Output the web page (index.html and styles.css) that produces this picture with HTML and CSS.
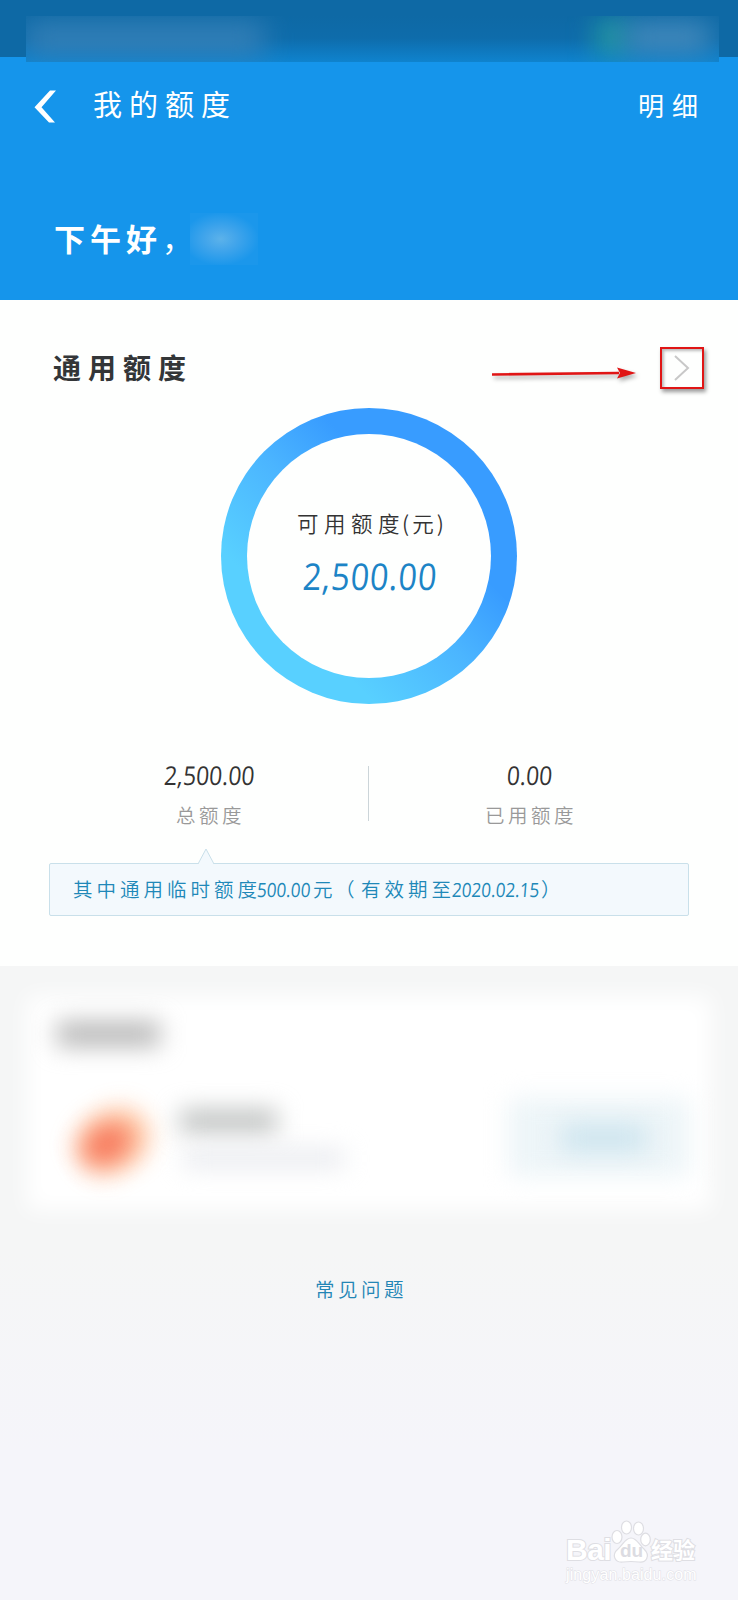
FILE: index.html
```html
<!DOCTYPE html>
<html lang="zh-CN">
<head>
<meta charset="utf-8">
<title>我的额度</title>
<link rel="stylesheet" href="styles.css">
</head>
<body>
<div class="page">
  <header class="hero">
    <div class="status">
      <div class="status-blur"><i class="smudge smudge-left"></i><i class="smudge smudge-green"></i><i class="smudge smudge-right"></i></div>
    </div>
    <nav class="nav">
      <svg class="back" width="24" height="34" viewBox="0 0 24 34"><path d="M16 0.500H22L7.500 17.300 21 32.500H15L0.500 17.300Z" fill="#fff"/></svg>
      <h1 class="title">我的额度</h1>
      <a class="detail">明细</a>
    </nav>
    <div class="greeting"><span class="hello">下午好<span class="comma">，</span></span><i class="name-blur"></i></div>
  </header>
  <main class="quota">
    <div class="quota-head">
      <h2 class="quota-title">通用额度</h2>
      <svg class="arrow" width="148" height="20" viewBox="0 0 148 20"><path d="M1 12.500 128 11" stroke="#e01515" stroke-width="2.600"/><path d="M126 5.500 145 11 126 16.500 129 11Z" fill="#e01515"/></svg>
      <div class="marker"><svg width="16" height="28" viewBox="0 0 16 28"><path d="M1 2 14 14 1 26" fill="none" stroke="#c8c8c8" stroke-width="2"/></svg></div>
    </div>
    <div class="ring">
      <div class="ring-inner">
        <div class="ring-label">可用额度<span class="unit">(元)</span></div>
        <div class="ring-value"><span class="num">2,500.00</span></div>
      </div>
    </div>
    <div class="stats">
      <div class="stat stat-total"><div class="stat-value num">2,500.00</div><div class="stat-label">总额度</div></div>
      <div class="divider"></div>
      <div class="stat stat-used"><div class="stat-value num">0.00</div><div class="stat-label">已用额度</div></div>
    </div>
    <div class="notice">
      <svg class="notch" width="18" height="17" viewBox="0 0 18 17"><path d="M1 16 9 1 17 16V17H1Z" fill="#f3f9fd"/><path d="M1 16 9 1 17 16" fill="none" stroke="#c9e0ea"/></svg>
      <span class="n-a">其中通用临时额度</span><span class="n-b"><span class="num">500.00</span></span><span class="n-c">元</span><span class="n-d">（</span><span class="n-e">有效期至</span><span class="n-f"><span class="num">2020.02.15</span></span><span class="n-g">）</span>
    </div>
  </main>
  <section class="promo">
    <div class="promo-card"></div>
    <i class="blob blob-heading"></i>
    <i class="blob blob-glow"></i><i class="blob blob-logo"></i>
    <i class="blob blob-name"></i>
    <i class="blob blob-desc"></i>
    <i class="blob blob-button"></i><i class="blob blob-action"></i>
  </section>
  <footer class="footer"><a class="faq">常见问题</a></footer>
  <div class="watermark">
    <div class="brand">
      <span class="bai">Bai</span>
      <span class="paw"><svg width="40" height="44" viewBox="0 0 40 44"><g fill="#fff" stroke="#dedee3" stroke-width="1.200"><ellipse cx="6" cy="17" rx="5" ry="6.500"/><ellipse cx="15.500" cy="7.500" rx="5" ry="6.500"/><ellipse cx="27.500" cy="8.500" rx="5" ry="6.500"/><ellipse cx="34.500" cy="19.500" rx="4.800" ry="6.300"/><path d="M20 18C26 18 28 25 33 29C40 36 35 43 28 42Q20 41 12 42C4 43 0 35 7 29C12 25 14 18 20 18Z"/></g></svg><b class="du">du</b></span>
      <span class="jy">经验</span>
    </div>
    <div class="url">jingyan.baidu.com</div>
  </div>
</div>
</body>
</html>
```
FILE: styles.css
```css
* { box-sizing: border-box; }
body { margin: 0; font-family: "Noto Sans CJK SC", sans-serif; background: #f5f5fa; }
h1, h2 { margin: 0; }
i { display: block; }
.page { position: relative; width: 738px; height: 1600px; overflow: hidden; background: linear-gradient(#f5f6f6 1250px, #f5f5fa 1450px); }
.num { display: inline-block; font-family: "Open Sans", sans-serif; font-weight: 400; transform-origin: left center; transform: scaleX(.88) skewX(-5deg); }

.hero { height: 300px; background: #1595eb; }
.status { height: 57px; padding: 16px 19px 0 26px; background: #0e69a5; }
.status-blur { position: relative; height: 46px; overflow: hidden; background: linear-gradient(#0e69a5 0, #0e6cab 22px, #0f83ce 46px); }
.smudge { position: absolute; filter: blur(14px); }
.smudge-left { left: 0; top: 6px; width: 238px; height: 34px; background: #3b83b9; opacity: .85; }
.smudge-green { left: 572px; top: 6px; width: 28px; height: 30px; background: #2ba69e; }
.smudge-right { left: 600px; top: 7px; width: 84px; height: 29px; background: #488cbd; }

.nav { display: flex; align-items: center; height: 98px; padding: 0 34px; color: #fff; }
.back { margin-top: 2px; }
.title { margin: -6px 0 0 35px; font-size: 29px; font-weight: 400; line-height: 40px; letter-spacing: 7px; }
.detail { margin: -2px -2px 0 auto; font-size: 26px; font-weight: 400; line-height: 40px; letter-spacing: 8px; }
.greeting { display: flex; align-items: center; height: 52px; margin-top: 58px; padding-left: 54px; color: #fff; }
.hello { width: 136px; white-space: nowrap; font-size: 31px; font-weight: 700; letter-spacing: 5px; line-height: 44px; margin-top: -2px; }
.comma { font-weight: 400; }
.name-blur { width: 68px; height: 52px; background: radial-gradient(ellipse at 45% 50%, #5cb2ea 0, #42a5eb 30%, #1b97eb 72%); }

.quota { height: 666px; background: #fefffe; }
.quota-head { display: flex; align-items: center; height: 108px; padding: 27px 34px 0 53px; }
.quota-title { font-size: 28px; font-weight: 700; letter-spacing: 7px; line-height: 44px; margin-top: -1px; color: #333638; }
.arrow { margin: 9px 21px 0 auto; filter: drop-shadow(2px 3px 2px #aaa); }
.marker { display: flex; align-items: center; justify-content: center; width: 44px; height: 42px; border: 2px solid #e01515; box-shadow: 2px 3px 4px #999, inset 2px 2px 3px #bbb; }
.ring { width: 296px; height: 296px; margin-left: 221px; padding: 26px; border-radius: 50%; background: linear-gradient(45deg, #58d0ff 26%, #4bb5ff 49%, #389cff 66%); }
.ring-inner { height: 244px; padding-top: 71px; border-radius: 50%; background: #fefffe; }
.ring-label { padding-left: 50px; font-size: 21.500px; font-weight: 350; line-height: 36px; letter-spacing: 5.500px; color: #333; white-space: nowrap; }
.unit { margin-left: -3px; letter-spacing: 3px; }
.ring-value { padding-left: 56px; font-size: 37px; line-height: 50px; letter-spacing: .800px; color: #1c84c6; margin-top: 8px; }

.stats { display: flex; height: 68px; margin-top: 53px; }
.stat { display: flex; flex-direction: column; align-items: center; }
.stat-total { width: 368px; padding-left: 50px; }
.stat-used { width: 369px; padding-right: 48px; }
.stat-value { font-size: 26px; line-height: 36px; letter-spacing: 0; color: #333; transform-origin: center; }
.stat-label { margin-top: 8px; font-size: 19.500px; font-weight: 350; line-height: 28px; letter-spacing: 3.500px; color: #999; margin-right: -3px; }
.divider { width: 1px; height: 55px; margin-top: 9px; background: #ccd5d9; }
.notice { position: relative; display: flex; align-items: center; width: 640px; height: 53px; margin: 38px 0 0 49px; padding: 0 0 2px 23px; background: #f3f9fd; border: 1px solid #c9e0ea; border-radius: 2px; font-size: 19.500px; font-weight: 350; color: #2088b8; white-space: nowrap; }
.notch { position: absolute; left: 147px; top: -16px; }
.n-a { width: 184px; letter-spacing: 4px; }
.n-b { width: 56px; letter-spacing: 0; }
.n-c { width: 22px; }
.n-d { width: 26px; }
.n-e { width: 91px; letter-spacing: 4px; }
.n-f { width: 89px; letter-spacing: 0; }

.promo { position: relative; height: 264px; overflow: hidden; }
.promo-card { position: absolute; left: 27px; top: 30px; width: 684px; height: 214px; background: #fff; filter: blur(11px); }
.blob { position: absolute; filter: blur(12px); }
.blob-heading { left: 57px; top: 56px; width: 103px; height: 24px; background: #b4b4b4; }
.blob-logo { left: 80px; top: 159px; width: 54px; height: 38px; border-radius: 50%; background: #f4583f; opacity: .75; transform: rotate(-30deg); filter: blur(13px); }
.blob-glow { left: 74px; top: 144px; width: 78px; height: 62px; border-radius: 50%; background: #ffb780; opacity: .65; transform: rotate(-30deg); }
.blob-name { left: 180px; top: 144px; width: 97px; height: 22px; background: #bbbebd; }
.blob-desc { left: 184px; top: 184px; width: 160px; height: 17px; background: #e6e8ed; }
.blob-button { left: 509px; top: 132px; width: 180px; height: 78px; background: #edf5f8; }
.blob-action { left: 562px; top: 159px; width: 84px; height: 26px; background: #cce4ee; }

.footer { display: flex; padding: 45px 0 0 315px; }
.faq { font-size: 19.500px; font-weight: 350; line-height: 28px; letter-spacing: 3.500px; color: #2385b5; }

.watermark { position: absolute; left: 566px; top: 1520px; width: 140px; color: #fff; }
.brand { display: flex; align-items: flex-end; height: 44px; }
.bai { width: 45px; font: 700 30px/28px "Liberation Sans", sans-serif; letter-spacing: -.500px; -webkit-text-stroke: 2px #dedee3; paint-order: stroke fill; }
.paw { position: relative; width: 40px; height: 44px; }
.du { position: absolute; left: 9px; top: 20px; font: 700 19px/21px "Liberation Sans", sans-serif; color: #dcdce2; }
.jy { font-size: 22px; font-weight: 700; line-height: 32px; -webkit-text-stroke: 2px #dedee3; paint-order: stroke fill; }
.url { font: 16px/22px "Liberation Sans", sans-serif; letter-spacing: .100px; -webkit-text-stroke: 1px #dfdfe5; paint-order: stroke fill; }
```
